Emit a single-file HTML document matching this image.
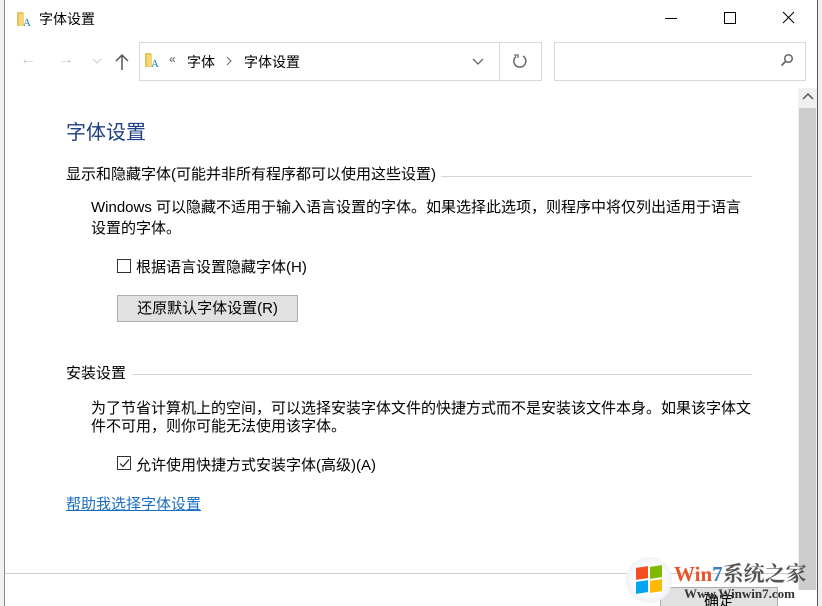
<!DOCTYPE html>
<html><head><meta charset="utf-8">
<style>
*{margin:0;padding:0;box-sizing:border-box}
body{width:822px;height:606px;overflow:hidden;background:#f0f0f0;font-family:"Liberation Sans","Microsoft YaHei","Noto Sans CJK SC",sans-serif;font-size:15px;color:#000;position:relative}
.win{position:absolute;left:4px;top:0;width:814px;height:606px;background:#fff;border-left:1px solid #888;border-right:1px solid #555}
.a{position:absolute;white-space:nowrap}
.line{position:absolute;height:1px;background:#d6d6d6}
.cb{position:absolute;width:14px;height:14px;border:1px solid #333;background:#fff}
</style></head><body>
<div class="win"></div>
<svg class="a" style="left:16px;top:11px" width="18" height="16" viewBox="0 0 18 16"><path d="M1 1h6l1 2h0v12H1z" fill="#e8c25a"/><path d="M3 3h5v12H3z" fill="#f5d77a"/><text x="7" y="15" font-size="11" fill="#1a7aa8" font-family="Liberation Serif">A</text></svg>
<div class="a" style="left:39px;top:9px;font-size:14px">字体设置</div>
<svg class="a" style="left:663px;top:10px" width="140" height="16"><path d="M2 8.5h12" stroke="#000" stroke-width="1"/><rect x="61.5" y="2.5" width="11" height="11" fill="none" stroke="#000"/><path d="M120 2l11 11M131 2l-11 11" stroke="#000"/></svg>
<div class="a" style="left:20px;top:51px;color:#c8c8c8;font-size:16px">←</div>
<div class="a" style="left:58px;top:51px;color:#c8c8c8;font-size:16px">→</div>
<svg class="a" style="left:92px;top:58px" width="10" height="6"><path d="M1 1l4 4 4-4" stroke="#c8c8c8" fill="none"/></svg>
<svg class="a" style="left:115px;top:53px" width="14" height="18"><path d="M7 17V2M1 8l6-6 6 6" stroke="#555" stroke-width="1.5" fill="none"/></svg>
<div class="a" style="left:139px;top:42px;width:403px;height:39px;border:1px solid #d9d9d9"></div>
<div class="a" style="left:499px;top:42px;width:1px;height:39px;background:#d9d9d9"></div>
<svg class="a" style="left:144px;top:51px" width="18" height="18" viewBox="0 0 18 16"><path d="M1 1h6l1 2v12H1z" fill="#e8c25a"/><path d="M3 3h5v12H3z" fill="#f5d77a"/><text x="7" y="15" font-size="11" fill="#1a7aa8" font-family="Liberation Serif">A</text></svg>
<div class="a" style="left:169px;top:52px;color:#555;font-size:12px">«</div>
<div class="a" style="left:187px;top:52px;font-size:14px">字体</div>
<svg class="a" style="left:226px;top:56px" width="6" height="10"><path d="M1 1l4 4-4 4" stroke="#666" fill="none"/></svg>
<div class="a" style="left:244px;top:52px;font-size:14px">字体设置</div>
<svg class="a" style="left:472px;top:58px" width="12" height="7"><path d="M1 1l5 5 5-5" stroke="#666" stroke-width="1.3" fill="none"/></svg>
<svg class="a" style="left:512px;top:53px" width="16" height="16"><path d="M4 3.5A6 6 0 1 0 11 3" stroke="#666" stroke-width="1.5" fill="none"/><path d="M2 2h4v3" stroke="#666" stroke-width="1.3" fill="none"/></svg>
<div class="a" style="left:554px;top:42px;width:252px;height:39px;border:1px solid #d9d9d9"></div>
<svg class="a" style="left:780px;top:53px" width="14" height="14"><circle cx="8.5" cy="5.5" r="3.8" stroke="#666" stroke-width="1.5" fill="none"/><path d="M6 8L1.5 12.5" stroke="#666" stroke-width="1.8"/></svg>
<div class="a" style="left:798px;top:88px;width:19px;height:502px;background:#f0f0f0"></div>
<div class="a" style="left:799px;top:108px;width:17px;height:482px;background:#cdcdcd"></div>
<svg class="a" style="left:802px;top:93px" width="12" height="8"><path d="M1 6l5-5 5 5" stroke="#555" stroke-width="1.5" fill="none"/></svg>
<div class="a" style="left:66px;top:116px;font-size:20px;color:#1e3f84">字体设置</div>
<div class="a" style="left:66px;top:163px">显示和隐藏字体(可能并非所有程序都可以使用这些设置)</div>
<div class="line" style="left:441px;top:176px;width:311px"></div>
<div class="a" style="left:91px;top:196px">Windows 可以隐藏不适用于输入语言设置的字体。如果选择此选项，则程序中将仅列出适用于语言</div>
<div class="a" style="left:91px;top:217px">设置的字体。</div>
<div class="cb" style="left:117px;top:259px"></div>
<div class="a" style="left:136px;top:256px">根据语言设置隐藏字体(H)</div>
<div class="a" style="left:117px;top:295px;width:181px;height:27px;background:#e1e1e1;border:1px solid #adadad;text-align:center;line-height:25px">还原默认字体设置(R)</div>
<div class="a" style="left:66px;top:362px">安装设置</div>
<div class="line" style="left:132px;top:374px;width:620px"></div>
<div class="a" style="left:91px;top:397px">为了节省计算机上的空间，可以选择安装字体文件的快捷方式而不是安装该文件本身。如果该字体文</div>
<div class="a" style="left:91px;top:415px">件不可用，则你可能无法使用该字体。</div>
<div class="cb" style="left:117px;top:456px"></div>
<svg class="a" style="left:119px;top:458px" width="11" height="11"><path d="M1 5.5l3 3 6-7" stroke="#222" stroke-width="1.2" fill="none"/></svg>
<div class="a" style="left:136px;top:454px">允许使用快捷方式安装字体(高级)(A)</div>
<div class="a" style="left:66px;top:493px;color:#1a6ec0;text-decoration:underline">帮助我选择字体设置</div>
<div class="line" style="left:5px;top:573px;width:793px;background:#cfcfcf"></div>
<div class="a" style="left:660px;top:587px;width:118px;height:19px;background:#e1e1e1;border:1px solid #adadad;border-bottom:none;overflow:hidden;text-align:center"><span style="position:relative;top:2px;font-size:15px">确定</span></div>
<div class="a" style="left:626px;top:557px;width:46px;height:46px;border-radius:50%;background:radial-gradient(circle,#fff 40%,#dfe6ee 100%)"></div>
<div class="a" style="left:636px;top:567px;width:12px;height:12px;background:#f25022;transform:skewY(-8deg)"></div>
<div class="a" style="left:650px;top:566px;width:12px;height:12px;background:#7fba00;transform:skewY(-8deg)"></div>
<div class="a" style="left:636px;top:581px;width:12px;height:12px;background:#00a4ef;transform:skewY(-8deg)"></div>
<div class="a" style="left:650px;top:580px;width:12px;height:12px;background:#ffb900;transform:skewY(-8deg)"></div>
<div class="a" style="left:674px;top:558px;font-size:21px;font-weight:bold;font-family:'Liberation Serif','Noto Serif CJK SC',serif"><span style="color:#e8552a">Win</span><span style="color:#3b7fc0">7</span><span style="color:#555">系统之家</span></div>
<div class="a" style="left:684px;top:586px;font-size:13px;font-weight:bold;color:#333;font-family:'Liberation Serif',serif">Www.Winwin7.com</div>
</body></html>
